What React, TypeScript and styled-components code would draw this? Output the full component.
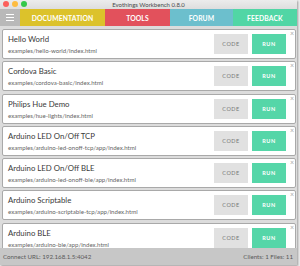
import React from "react";
import styled, { createGlobalStyle } from "styled-components";

const Global = createGlobalStyle`
  html, body { margin: 0; padding: 0; background: #eeeeee; }
  body { width: 300px; height: 266px; overflow: hidden; font-family: Lato, "Open Sans", sans-serif; }
  * { box-sizing: border-box; }
`;

const Window = styled.div`
  width: 297px;
  height: 265px;
  display: flex;
  flex-direction: column;
  background: #dcdcdc;
  box-shadow: 1px 1px 2px rgba(0,0,0,0.35);
  overflow: hidden;
`;

const TitleBar = styled.div`
  height: 9px;
  flex: none;
  position: relative;
  display: flex;
  align-items: center;
  justify-content: center;
  background: linear-gradient(#ececec, #dedede);
  font-size: 6px;
  color: #4a4a4a;
`;

const Lights = styled.div`
  position: absolute;
  left: 3px;
  top: 1px;
  display: flex;
  gap: 3px;
`;

const Light = styled.span<{ $c: string }>`
  width: 6px;
  height: 6px;
  border-radius: 50%;
  background: ${(p) => p.$c};
`;

const Nav = styled.div`
  height: 17px;
  flex: none;
  display: flex;
`;

const Burger = styled.div`
  width: 20px;
  background: #b9b9b9;
  display: flex;
  flex-direction: column;
  justify-content: center;
  align-items: center;
  gap: 1.4px;
  span { width: 8px; height: 1.6px; background: #fff; }
`;

const Tab = styled.div<{ $bg: string; $w: number }>`
  width: ${(p) => p.$w}px;
  background: ${(p) => p.$bg};
  color: #fff;
  display: flex;
  align-items: center;
  justify-content: center;
  font-family: Lato, sans-serif;
  font-size: 6.8px;
  font-weight: 700;
  letter-spacing: 0.1px;
`;

const Content = styled.div`
  flex: 1;
  overflow: hidden;
  display: flex;
  flex-direction: column;
  gap: 2.3px;
  padding: 3px 1px 0 2px;
`;

const Card = styled.div`
  flex: none;
  height: 30px;
  background: #fff;
  border: 1px solid #a9a9a9;
  border-radius: 2px;
  display: flex;
  align-items: center;
  padding: 0 9px 0 5px;
  position: relative;
`;

const Info = styled.div`
  flex: 1;
  display: flex;
  flex-direction: column;
  gap: 3px;
`;

const Name = styled.div`
  font-size: 7.8px;
  color: #3a3a3a;
`;

const Path = styled.div`
  font-size: 6.1px;
  color: #666;
`;

const Btn = styled.div<{ $run?: boolean }>`
  width: 34px;
  height: 20px;
  margin-left: 4px;
  display: flex;
  align-items: center;
  justify-content: center;
  font-size: 5.5px;
  letter-spacing: 0.5px;
  font-weight: ${(p) => (p.$run ? 700 : 400)};
  background: ${(p) => (p.$run ? "#55d6a8" : "#e1e1e1")};
  color: ${(p) => (p.$run ? "#fff" : "#777")};
`;

const Close = styled.span`
  position: absolute;
  right: 1px;
  top: -1px;
  font-size: 7px;
  color: #aaa;
`;

const Footer = styled.div`
  height: 17px;
  flex: none;
  background: #c7c7c7;
  display: flex;
  align-items: center;
  justify-content: space-between;
  padding: 0 4px 0 3px;
  font-size: 6.2px;
  color: #5a5a5a;
`;

const items = [
  ["Hello World", "examples/hello-world/index.html"],
  ["Cordova Basic", "examples/cordova-basic/index.html"],
  ["Philips Hue Demo", "examples/hue-lights/index.html"],
  ["Arduino LED On/Off TCP", "examples/arduino-led-onoff-tcp/app/index.html"],
  ["Arduino LED On/Off BLE", "examples/arduino-led-onoff-ble/app/index.html"],
  ["Arduino Scriptable", "examples/arduino-scriptable-tcp/app/index.html"],
  ["Arduino BLE", "examples/arduino-ble/app/index.html"],
];

export default function App() {
  return (
    <>
      <Global />
      <Window>
        <TitleBar>
          <Lights>
            <Light $c="#fc605c" />
            <Light $c="#fdbc40" />
            <Light $c="#34c84a" />
          </Lights>
          Evothings Workbench 0.8.0
        </TitleBar>
        <Nav>
          <Burger>
            <span />
            <span />
            <span />
          </Burger>
          <Tab $bg="#dcc22b" $w={85}>DOCUMENTATION</Tab>
          <Tab $bg="#e2515c" $w={65}>TOOLS</Tab>
          <Tab $bg="#6cbfcd" $w={63}>FORUM</Tab>
          <Tab $bg="#51d6a5" $w={64}>FEEDBACK</Tab>
        </Nav>
        <Content>
          {items.map(([n, p]) => (
            <Card key={n}>
              <Info>
                <Name>{n}</Name>
                <Path>{p}</Path>
              </Info>
              <Btn>CODE</Btn>
              <Btn $run>RUN</Btn>
              <Close>×</Close>
            </Card>
          ))}
        </Content>
        <Footer>
          <span>Connect URL: 192.168.1.5:4042</span>
          <span>Clients: 1 Files: 11</span>
        </Footer>
      </Window>
    </>
  );
}
